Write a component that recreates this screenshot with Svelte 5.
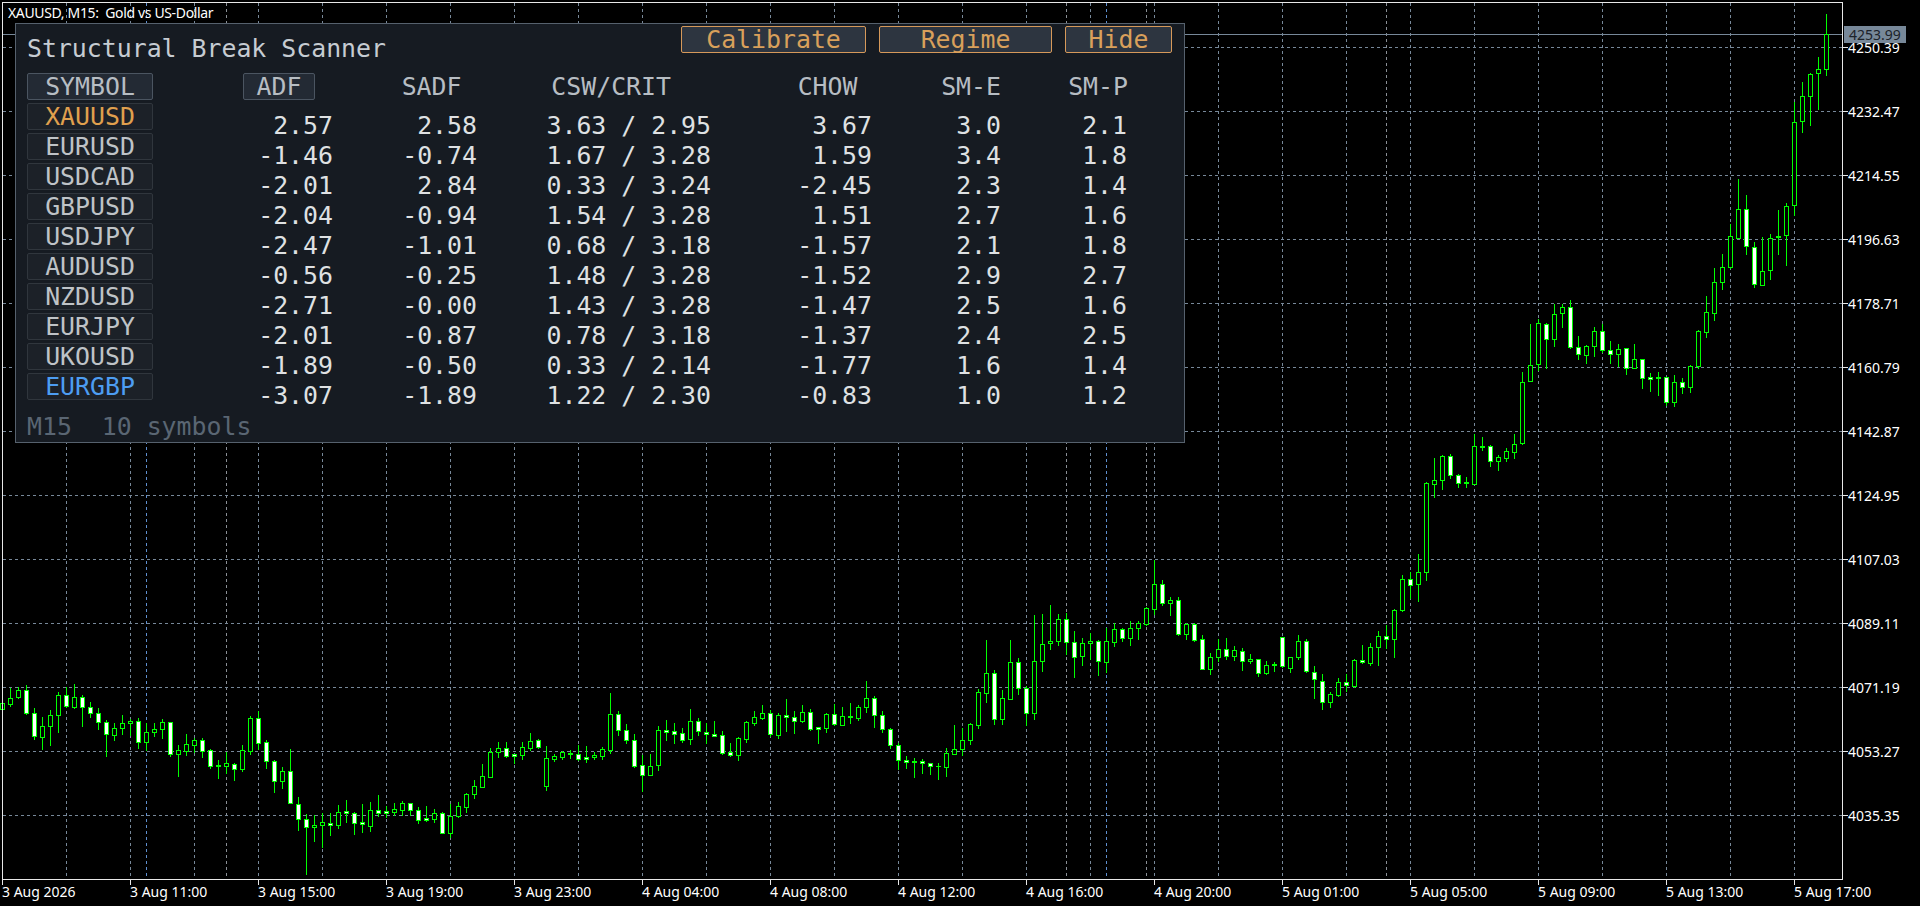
<script>
  const chunks = [
    { base: 660, rows: [
      [125,150,130,148,0],[83,137,115,131,0],[82,115,91,112,0],[75,162,91,160,1],[145,238,160,229,1],[172,267,199,230,0],[150,255,166,199,0],[97,216,106,166,0],[80,141,106,139,1],[72,143,112,140,0],
      [105,198,112,142,1],[127,172,142,160,1],[144,207,160,187,1],[180,288,187,223,1],[190,240,205,224,0],[165,222,190,205,0],[178,225,184,190,0],[175,264,184,245,1],[190,270,217,245,0],[188,228,208,217,0],
      [178,235,187,208,0],[187,288,187,281,1],[255,348,271,281,0],[222,285,253,272,0],[235,275,241,254,0],[233,292,241,272,1],[268,323,270,317,1],[300,354,316,317,1],[275,340,310,317,0],[310,360,313,326,1],
      [255,332,270,326,0],[168,283,175,272,0],[152,267,175,248,1],[240,324,247,302,1],[300,396,302,364,1],[322,385,334,364,0],[267,430,334,430,1],[411,510,431,478,1],[462,641,478,502,1],[465,542,496,502,0],
      [458,560,487,496,0],[460,525,490,496,1],[435,503,455,496,0],[420,485,454,458,1],[455,521,458,488,1],[432,517,487,491,1],[426,513,451,497,0],[405,467,451,458,1],[438,470,454,458,1],[428,466,448,455,0],
      [424,465,430,449,0],[428,465,430,449,1],[440,488,449,479,1],[438,482,475,479,1],[448,486,460,476,0],[457,520,460,518,1],[432,530,468,518,0],[427,470,439,469,0],[400,456,401,440,0],[360,414,379,401,0],
      [312,380,349,380,0],[263,352,277,350,0],[246,291,265,277,0],[246,292,265,287,1],[284,310,283,287,1],[247,298,262,284,0],[220,270,244,263,0],[237,265,241,260,1],[258,390,295,377,0],[282,302,287,296,0],
      [272,296,277,290,0],[270,295,280,281,1],[255,300,281,296,1],[258,305,292,296,1],[275,298,286,292,0],[260,298,268,287,0],[99,278,163,269,0],[153,225,163,211,1],[193,250,211,241,1],[222,320,241,317,1]
    ]},
    { base: 560, rows: [
      [585,692,616,644,1],[582,645,617,644,0],[498,630,511,616,0],[480,540,510,515,1],[490,550,514,521,1],[505,545,520,539,1],[447,552,484,537,0],[475,526,484,514,1],[490,548,515,523,1],[483,528,523,527,1],
      [514,582,526,578,1],[548,587,576,584,1],[530,600,535,584,0],[484,547,487,536,0],[453,496,472,488,0],[435,476,460,473,0],[450,527,460,523,1],[460,534,466,524,0],[417,514,466,472,1],[452,520,472,482,1],
      [435,487,457,482,0],[447,510,457,506,1],[502,549,502,506,1],[460,516,463,503,0],[433,495,463,491,1],[442,494,469,494,0],[430,489,468,472,1],[434,480,441,473,0],[363,455,415,442,0],[408,500,415,466,1],
      [453,515,466,508,1],[505,563,508,554,1],[550,627,556,601,1],[587,623,601,605,1],[594,651,604,605,1],[598,640,604,610,1],[610,642,610,619,1],[608,657,618,619,1],[564,648,580,620,0],[495,582,568,581,0],
      [505,584,539,568,0],[489,552,492,539,0],[388,503,397,494,0],[240,426,340,400,0],[330,491,340,478,1],[390,491,415,478,0],[240,416,307,416,0],[295,402,307,385,1],[378,495,385,460,1],[165,477,304,460,0],
      [162,333,253,304,0],[135,268,244,250,0],[162,255,178,242,0],[160,283,178,247,1],[213,351,247,290,1],[235,315,250,289,0],[218,297,244,250,0],[240,345,243,304,1],[203,335,244,305,0],[190,258,208,245,0],
      [205,243,208,233,1],[182,255,205,233,0],[183,237,190,205,0],[140,195,145,191,0],[0,162,73,146,0],[60,135,73,130,1],[112,165,120,130,0],[112,225,120,223,1],[190,236,193,223,0],[190,242,193,239,1],
      [225,328,238,326,1],[280,341,290,326,0],[238,303,268,290,0],[235,296,268,287,1],[258,300,271,287,0],[265,331,274,304,1],[283,310,297,304,0],[296,347,298,338,1],[304,341,314,338,0],[305,333,313,314,1]
    ]},
    { base: 300, rows: [
      [1010,1100,1010,1098,1],[1070,1115,1070,1103,0],[1005,1077,1024,1070,0],[1018,1115,1024,1113,1],[1098,1193,1115,1137,1],[1122,1227,1142,1205,1],[1175,1220,1183,1205,0],[1135,1187,1147,1184,0],[1122,1172,1147,1156,1],[1078,1160,1081,1157,0],
      [1035,1090,1081,1087,1],[1030,1095,1042,1088,0],[993,1095,1007,1042,0],[975,1043,1007,1018,1],[928,1070,929,1018,0],[825,932,838,929,0],[816,895,838,856,1],[762,902,817,853,0],[545,840,550,815,0],[475,590,541,551,0],
      [466,566,469,541,0],[462,535,469,526,1],[522,560,526,548,1],[530,560,546,550,1],[403,552,439,551,0],[412,450,438,440,0],[435,497,437,484,1],[466,510,472,484,0],[445,482,454,473,0],[403,473,431,455,0],
      [217,431,245,430,0],[72,242,194,242,0],[58,210,70,193,0],[68,203,71,118,1],[12,137,43,118,0],[12,80,22,40,0],[0,143,22,142,1],[108,177,142,163,1],[135,188,139,164,0],[82,168,94,139,0],
      [72,157,94,151,1],[123,188,151,163,1],[132,197,146,161,0],[143,222,143,205,1],[132,205,178,205,0],[178,263,178,235,1],[220,272,232,236,1],[216,285,232,233,1],[232,315,232,307,1],[226,317,247,307,0],
      [235,278,247,262,1],[195,275,197,262,0],[90,203,94,197,0],[-12,110,37,95,0]
    ]},
    { base: 0, rows: [
      [805,960,845,938,0],[762,866,802,845,0],[672,803,709,802,0],[538,713,626,713,0],[586,762,626,738,1],[727,862,740,853,1],[712,856,812,856,0],[703,836,713,811,0],[630,762,707,712,0],[610,795,619,706,0],
      [307,645,365,616,0],[246,395,287,364,0],[218,374,221,287,0],[172,326,208,220,0],[42,225,103,208,0]
    ]}
  ];

  const candles = chunks.flatMap((c) =>
    c.rows.map(([hi, lo, top, bot, bear]) => ({
      hi: Math.round(c.base + hi / 3),
      lo: Math.round(c.base + lo / 3),
      top: Math.round(c.base + top / 3),
      bot: Math.round(c.base + bot / 3),
      bear
    }))
  ).map((c, k) => ({ ...c, x: 2 + 8 * k }));

  const prices = ['4250.39','4232.47','4214.55','4196.63','4178.71','4160.79','4142.87','4124.95','4107.03','4089.11','4071.19','4053.27','4035.35'];
  const times = ['3 Aug 2026','3 Aug 11:00','3 Aug 15:00','3 Aug 19:00','3 Aug 23:00','4 Aug 04:00','4 Aug 08:00','4 Aug 12:00','4 Aug 16:00','4 Aug 20:00','5 Aug 01:00','5 Aug 05:00','5 Aug 09:00','5 Aug 13:00','5 Aug 17:00'];
  const vgrid = Array.from({ length: 29 }, (_, i) => 2 + 64 * i).filter((x) => x > 2);
  const seps = [226, 1066, 1146, 1386];
  const blueSeps = [146, 1106];

  const symbols = ['XAUUSD','EURUSD','USDCAD','GBPUSD','USDJPY','AUDUSD','NZDUSD','EURJPY','UKOUSD','EURGBP'];
  const rows = [
    ['2.57','2.58','3.63 / 2.95','3.67','3.0','2.1'],
    ['-1.46','-0.74','1.67 / 3.28','1.59','3.4','1.8'],
    ['-2.01','2.84','0.33 / 3.24','-2.45','2.3','1.4'],
    ['-2.04','-0.94','1.54 / 3.28','1.51','2.7','1.6'],
    ['-2.47','-1.01','0.68 / 3.18','-1.57','2.1','1.8'],
    ['-0.56','-0.25','1.48 / 3.28','-1.52','2.9','2.7'],
    ['-2.71','-0.00','1.43 / 3.28','-1.47','2.5','1.6'],
    ['-2.01','-0.87','0.78 / 3.18','-1.37','2.4','2.5'],
    ['-1.89','-0.50','0.33 / 2.14','-1.77','1.6','1.4'],
    ['-3.07','-1.89','1.22 / 2.30','-0.83','1.0','1.2']
  ];
</script>

<div class="page">
  <svg class="chart" width="1920" height="906" viewBox="0 0 1920 906">
    {#each vgrid as x}
      <line class="grid" x1={x + 0.5} x2={x + 0.5} y1="3" y2="879" />
    {/each}
    {#each seps as x}
      <line class="grid sep" x1={x + 0.5} x2={x + 0.5} y1="3" y2="879" />
    {/each}
    {#each blueSeps as x}
      <line class="grid blue" x1={x + 0.5} x2={x + 0.5} y1="3" y2="879" />
    {/each}
    {#each prices as _, i}
      <line class="grid" x1="3" x2="1842" y1={47.5 + 64 * i} y2={47.5 + 64 * i} />
    {/each}
    <line class="pline" x1="3" x2="1843" y1="34.5" y2="34.5" />

    {#each candles as c}
      <line class="wick" x1={c.x + 0.5} x2={c.x + 0.5} y1={c.hi} y2={c.lo + 1} />
      {#if c.bot - c.top < 1}
        <line class="wick" x1={c.x - 2} x2={c.x + 3} y1={c.top + 0.5} y2={c.top + 0.5} />
      {:else}
        <rect class={c.bear ? 'bear' : 'bull'} x={c.x - 1.5} y={c.top + 0.5} width="4" height={c.bot - c.top} />
      {/if}
    {/each}

    <rect class="frame" x="2.5" y="2.5" width="1840" height="876.5" />

    {#each prices as p, i}
      <line class="tick" x1="1843" x2="1848" y1={47.5 + 64 * i} y2={47.5 + 64 * i} />
      <text class="axis" x="1848" y={53 + 64 * i}>{p}</text>
    {/each}
    {#each times as t, i}
      <line class="tick" x1={2.5 + 128 * i} x2={2.5 + 128 * i} y1="879" y2="885" />
      <text class="axis" x={2 + 128 * i} y="897">{t}</text>
    {/each}

    <rect class="pricebox" x="1844" y="26" width="62" height="17" />
    <text class="axis dark" x="1849" y="40">4253.99</text>

    <text class="axis caption" x="8" y="18">XAUUSD, M15:  Gold vs US-Dollar</text>
  </svg>

  <section class="panel">
    <div class="top">
      <div class="title">Structural Break Scanner</div>
      <div class="actions">
        <button class="act calibrate">Calibrate</button>
        <button class="act regime">Regime</button>
        <button class="act hide">Hide</button>
      </div>
    </div>

    <div class="heads">
      <div class="cell head-on">SYMBOL</div>
      <div class="hc"><span class="cell head-on adf">ADF</span></div>
      <div class="hc">SADF</div>
      <div class="hc">CSW/CRIT</div>
      <div class="hc">CHOW</div>
      <div class="hc">SM-E</div>
      <div class="hc">SM-P</div>
    </div>

    <div class="body">
      <div class="symbols">
        {#each symbols as s, i}
          <div class="cell sym" class:gold={i === 0} class:blue={i === 9}>{s}</div>
        {/each}
      </div>
      <div class="data">
        {#each rows as r}
          <div class="row">
            {#each r as v}
              <span>{v}</span>
            {/each}
          </div>
        {/each}
      </div>
    </div>

    <div class="foot">M15  10 symbols</div>
  </section>
</div>

<style>
  :global(body) {
    margin: 0;
    background: #000;
    overflow: hidden;
  }
  .page {
    position: relative;
    width: 1920px;
    height: 906px;
    background: #000;
  }
  .chart {
    display: block;
  }
  .grid {
    stroke: #778899;
    stroke-width: 1;
    stroke-dasharray: 3 3;
    shape-rendering: crispEdges;
  }
  .grid.sep {
    stroke: #8a8f96;
  }
  .grid.blue {
    stroke: #5f8fd0;
  }
  .pline {
    stroke: #778899;
    stroke-width: 1;
    shape-rendering: crispEdges;
  }
  .wick {
    stroke: #00ff00;
    stroke-width: 1;
    shape-rendering: crispEdges;
  }
  .bull {
    fill: #000;
    stroke: #00ff00;
    stroke-width: 1;
    shape-rendering: crispEdges;
  }
  .bear {
    fill: #fff;
    stroke: #00ff00;
    stroke-width: 1;
    shape-rendering: crispEdges;
  }
  .frame {
    fill: none;
    stroke: #e8e8e8;
    stroke-width: 1;
    shape-rendering: crispEdges;
  }
  .tick {
    stroke: #e8e8e8;
    stroke-width: 1;
    shape-rendering: crispEdges;
  }
  .axis {
    fill: #fff;
    font-family: "Noto Sans", "DejaVu Sans", sans-serif;
    font-size: 14px;
    white-space: pre;
  }
  .axis.dark {
    fill: #1c222a;
  }
  .axis.caption {
    font-size: 14px;
    letter-spacing: -0.35px;
  }
  .pricebox {
    fill: #778899;
  }

  .panel {
    position: absolute;
    left: 15px;
    top: 23px;
    width: 1170px;
    height: 420px;
    box-sizing: border-box;
    background: #161b22;
    border: 1px solid #56616d;
    padding: 2px 12px 0 11px;
    font-family: "DejaVu Sans Mono", "Liberation Mono", monospace;
    font-size: 24.85px;
    color: #dfe1e3;
  }
  .top {
    display: flex;
    justify-content: space-between;
    align-items: flex-start;
    height: 47px;
  }
  .title {
    color: #c6ccd2;
    line-height: 30px;
    padding-top: 8px;
    white-space: pre;
  }
  .actions {
    display: flex;
    gap: 13px;
  }
  .act {
    height: 27px;
    box-sizing: border-box;
    padding: 0;
    background: #2d3540;
    border: 1px solid #d6995a;
    border-radius: 2px;
    color: #d9a05b;
    font: inherit;
    line-height: 23px;
  }
  .calibrate { width: 185px; }
  .regime { width: 173px; }
  .hide { width: 107px; }

  .heads {
    display: grid;
    grid-template-columns: 126px 162px 146.5px 209.5px 186.5px 143.5px 127px;
    height: 27px;
    align-items: center;
    color: #b7bdc3;
  }
  .hc {
    justify-self: end;
    line-height: 27px;
  }
  .cell {
    box-sizing: border-box;
    height: 27px;
    line-height: 25px;
    text-align: center;
    border-radius: 2px;
    white-space: pre;
  }
  .head-on {
    background: #232a34;
    border: 1px solid #4b5561;
  }
  .adf {
    display: block;
    width: 72px;
  }
  .body {
    display: flex;
    margin-top: 3px;
  }
  .symbols {
    display: flex;
    flex-direction: column;
    gap: 3px;
    width: 126px;
    flex: none;
  }
  .sym {
    background: #1c2128;
    border: 1px solid #30363d;
    color: #bfc3c7;
  }
  .sym.gold {
    color: #e0a04e;
  }
  .sym.blue {
    color: #4d9df2;
  }
  .data {
    padding-top: 8px;
  }
  .row {
    display: grid;
    grid-template-columns: 180px 144px 234px 161px 129px 126px;
    height: 30px;
    line-height: 30px;
  }
  .row span {
    text-align: right;
    white-space: pre;
  }
  .foot {
    margin-top: 1px;
    line-height: 30px;
    color: #5a6673;
    white-space: pre;
  }
</style>
